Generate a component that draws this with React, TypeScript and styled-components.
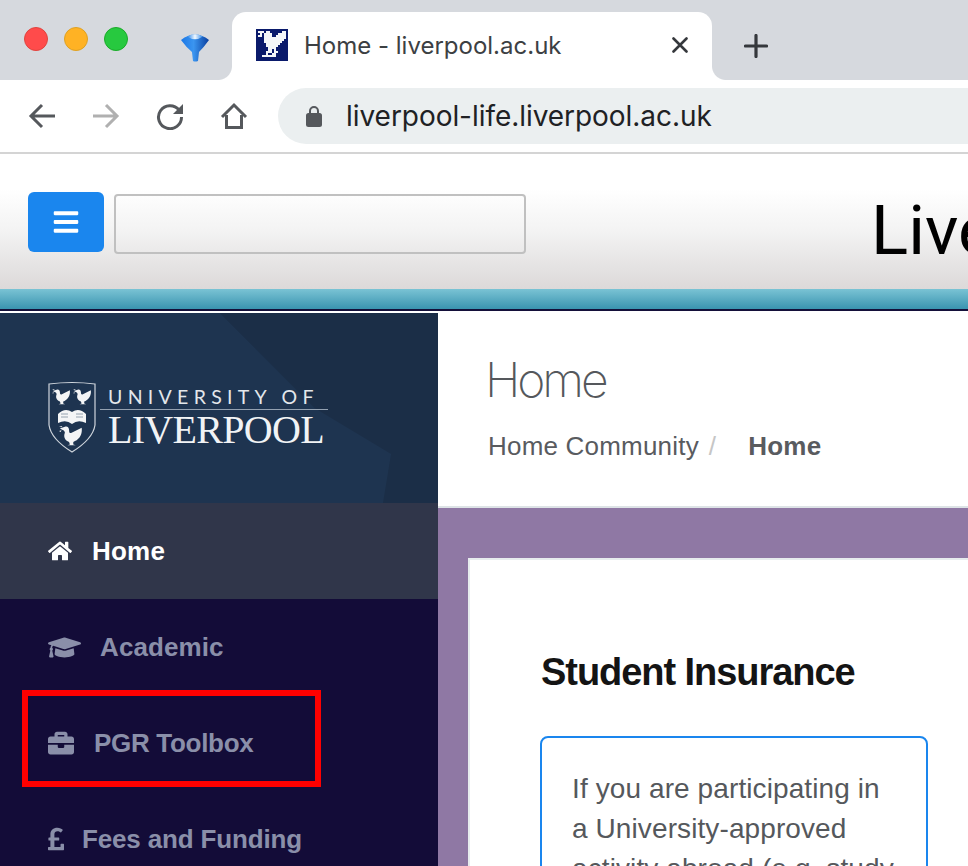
import React from 'react';
import styled, { createGlobalStyle } from 'styled-components';
import { FaHome, FaGraduationCap, FaBriefcase, FaPoundSign, FaBars } from 'react-icons/fa';

const Global = createGlobalStyle`
  html, body { margin: 0; padding: 0; background: #fff; }
  * { box-sizing: border-box; }
`;

const Viewport = styled.div`
  width: 968px;
  height: 866px;
  overflow: hidden;
  display: flex;
  flex-direction: column;
  font-family: "Liberation Sans", Arial, sans-serif;
`;

const TabStrip = styled.div`
  height: 80px;
  flex: none;
  background: #d6d9de;
  display: flex;
  align-items: flex-end;
`;

const Lights = styled.div`
  display: flex;
  gap: 16px;
  padding-left: 24px;
  align-self: flex-start;
  margin-top: 27px;
`;

const Light = styled.span<{ $fill: string; $edge: string }>`
  width: 24px;
  height: 24px;
  border-radius: 50%;
  background: ${p => p.$fill};
  border: 1px solid ${p => p.$edge};
`;

const FunnelSlot = styled.div`
  width: 28px;
  height: 30px;
  margin: 0 0 18px 53px;
  flex: none;
`;

const Tab = styled.div`
  position: relative;
  width: 480px;
  height: 68px;
  margin-left: 23px;
  background: #fff;
  border-radius: 14px 14px 0 0;
  display: flex;
  align-items: center;
  padding: 0 24px 2px;
  &::before, &::after {
    content: '';
    position: absolute;
    bottom: 0;
    width: 14px;
    height: 14px;
  }
  &::before {
    left: -14px;
    background: radial-gradient(circle at 0 0, transparent 13.5px, #fff 14.5px);
  }
  &::after {
    right: -14px;
    background: radial-gradient(circle at 100% 0, transparent 13.5px, #fff 14.5px);
  }
`;

const TabTitle = styled.span`
  font-family: Inter, "Liberation Sans", sans-serif;
  font-size: 24px;
  color: #3c4043;
  margin-left: 16px;
  flex: 1;
  white-space: nowrap;
`;

const NewTab = styled.div`
  width: 24px;
  height: 24px;
  margin: 0 0 22px 32px;
  flex: none;
`;

const Toolbar = styled.div`
  height: 72px;
  flex: none;
  background: #fff;
  display: flex;
  align-items: center;
  padding-left: 10px;
`;

const ToolButton = styled.div`
  width: 64px;
  height: 28px;
  flex: none;
  display: flex;
  align-items: center;
  justify-content: center;
`;

const Address = styled.div`
  flex: 1;
  height: 56px;
  margin-left: 12px;
  background: #ebeff0;
  border-radius: 28px 0 0 28px;
  display: flex;
  align-items: center;
  padding-left: 28px;
  gap: 24px;
`;

const Url = styled.span`
  font-family: Inter, "Liberation Sans", sans-serif;
  font-size: 28px;
  letter-spacing: -0.050px;
  color: #202124;
  white-space: nowrap;
`;

const Divider = styled.div`
  height: 2px;
  flex: none;
  background: #d4d4d4;
`;

const SiteHeader = styled.header`
  height: 135px;
  flex: none;
  background: linear-gradient(#fff 0%, #fff 26%, #f4f4f4 55%, #dcd9d9 100%);
  display: flex;
  align-items: flex-start;
  padding: 38px 0 0 28px;
  overflow: hidden;
`;

const MenuButton = styled.button`
  width: 76px;
  height: 60px;
  flex: none;
  border: 0;
  padding: 0;
  border-radius: 6px;
  background: #1a86ee;
  color: #fff;
  font-size: 28px;
  display: flex;
  align-items: center;
  justify-content: center;
`;

const SearchBox = styled.div`
  width: 412px;
  height: 60px;
  flex: none;
  margin: 2px 0 0 10px;
  border: 2px solid #c0c0c0;
  border-radius: 4px;
`;

const SiteTitle = styled.div`
  margin-left: 345px;
  margin-top: 1px;
  font-family: Roboto, "Liberation Sans", sans-serif;
  font-weight: 400;
  font-size: 69px;
  line-height: 76px;
  color: #000;
  white-space: nowrap;
  flex: none;
`;

const TealBar = styled.div`
  height: 20px;
  flex: none;
  background: linear-gradient(#7ac3d4, #3a94b0);
`;

const NavyRule = styled.div`
  height: 4px;
  flex: none;
  background: linear-gradient(#14103a 50%, #fff 50%);
`;

const Body = styled.div`
  flex: 1;
  min-height: 0;
  display: flex;
`;

const Sidebar = styled.aside`
  width: 438px;
  flex: none;
  background: #130c38;
  display: flex;
  flex-direction: column;
`;

const LogoPanel = styled.div`
  position: relative;
  height: 190px;
  flex: none;
  background: #1e3450;
  display: flex;
  align-items: flex-start;
  padding: 68px 0 0 48px;
  overflow: hidden;
  &::before {
    content: '';
    position: absolute;
    inset: -20px;
    background: #1b2e47;
    clip-path: polygon(46% 0, 120% 0, 120% 120%, 82% 120%, 86% 70%, 70% 50%);
    filter: blur(4px);
  }
  > * { position: relative; }
`;

const Shield = styled.div`
  width: 48px;
  height: 72px;
  flex: none;
`;

const Wordmark = styled.div`
  margin-left: 4px;
  display: flex;
  flex-direction: column;
  width: 228px;
`;

const University = styled.div`
  font-family: Lato, "Liberation Sans", sans-serif;
  font-weight: 400;
  font-size: 19.500px;
  line-height: 22px;
  letter-spacing: 5.300px;
  color: #e3e7eb;
  padding: 5px 0 0 8px;
  white-space: nowrap;
`;

const Rule = styled.div`
  height: 1px;
  background: #94a1b1;
  margin-top: 1px;
`;

const Liverpool = styled.div`
  font-family: "Liberation Serif", serif;
  font-size: 40px;
  line-height: 40px;
  letter-spacing: -0.700px;
  color: #f1f3f5;
  padding: 0 0 0 8px;
  white-space: nowrap;
`;

const NavRow = styled.a<{ $active?: boolean; $gap: number }>`
  position: relative;
  height: 96px;
  flex: none;
  display: flex;
  align-items: center;
  gap: ${p => p.$gap}px;
  padding-left: 48px;
  font-size: 26px;
  font-weight: 700;
  color: ${p => (p.$active ? '#fff' : '#8a8fa9')};
  background: ${p => (p.$active ? '#30364a' : 'transparent')};
`;

const NavLabel = styled.span<{ $track: number }>`
  letter-spacing: ${p => p.$track}px;
  white-space: nowrap;
`;

const Highlight = styled.span`
  position: absolute;
  left: 22px;
  top: -5px;
  width: 299px;
  height: 97px;
  border: 6px solid #ff0000;
`;

const Main = styled.main`
  flex: 1;
  min-width: 0;
  background: #8f78a4;
  display: flex;
  flex-direction: column;
`;

const PageHead = styled.div`
  height: 195px;
  flex: none;
  background: #fff;
  border-bottom: 2px solid #dde3e6;
  padding: 38px 0 0 50px;
`;

const PageTitle = styled.h1`
  margin: 0 0 0 -3px;
  font-family: Inter, "Liberation Sans", sans-serif;
  font-weight: 200;
  font-size: 48px;
  line-height: 58px;
  letter-spacing: -3.100px;
  color: #55585c;
`;

const Crumbs = styled.div`
  margin-top: 19px;
  font-size: 26px;
  line-height: 36px;
  letter-spacing: 0.200px;
  color: #595b5f;
  display: flex;
  white-space: nowrap;
`;

const CrumbSep = styled.span`
  color: #c6c6c6;
  margin: 0 32px 0 10px;
`;

const CrumbNow = styled.b`
  font-weight: 700;
`;

const Card = styled.section`
  margin: 50px -60px 0 30px;
  flex: 1;
  background: #fff;
  border: 2px solid #e7ecee;
  border-bottom: 0;
  padding: 90px 0 0 71px;
`;

const CardTitle = styled.h2`
  margin: 0;
  font-size: 38px;
  line-height: 44px;
  font-weight: 700;
  letter-spacing: -1.050px;
  color: #141414;
`;

const InfoBox = styled.div`
  width: 388px;
  margin: 42px 0 0 -1px;
  border: 2px solid #1a86ee;
  border-radius: 8px;
  padding: 31px 30px;
  font-size: 28px;
  line-height: 40px;
  letter-spacing: 0.100px;
  color: #55585c;
`;

const Bird = ({ x, y, s }: { x: number; y: number; s: number }) => (
  <g transform={`translate(${x} ${y}) scale(${s})`} fill="#f4f5f6">
    <path d="M1 3 L7 1 C10 0 12 2 12 5 C12 8 13 9 15 8 L27 2 C28 9 25 15 19 18 L17 19 L17 22 L20 23 L10 23 L13 22 L12 19 C7 17 5 13 7 8 C7 7 6 5 5 5 Z" />
    <path d="M0 1 L4 0 L3 1.500 Z M0 6 L3 5 L2 7 Z" />
  </g>
);

const ShieldArt = () => (
  <svg width="48" height="72" viewBox="0 0 48 72">
    <path d="M1 3 Q24 0 47 3 L47 44 Q45 58 24 71 Q3 58 1 44 Z" fill="none" stroke="#cfd5dc" strokeWidth="1.200" />
    <Bird x={4} y={8} s={0.66} />
    <Bird x={25} y={8} s={0.66} />
    <path d="M10 33 Q17 26 24 31 Q31 26 38 33 L38 42 Q30 38 24 43 Q18 38 10 42 Z" fill="#f4f5f6" />
    <path d="M13 33 H20 M13 36 H20 M28 33 H35 M28 36 H35" stroke="#7f8ea0" strokeWidth="0.800" />
    <Bird x={11} y={45} s={0.84} />
  </svg>
);

const FunnelArt = () => (
  <svg width="28" height="30" viewBox="0 0 28 30">
    <defs>
      <linearGradient id="cone" x1="0" x2="1" y1="0" y2="0">
        <stop offset="0" stopColor="#1c78e6" />
        <stop offset="0.450" stopColor="#3b95f0" />
        <stop offset="1" stopColor="#0a3f9f" />
      </linearGradient>
      <linearGradient id="rim" x1="0" x2="1" y1="0" y2="0">
        <stop offset="0" stopColor="#1f80ea" />
        <stop offset="0.500" stopColor="#f2f9ff" />
        <stop offset="1" stopColor="#2a86ea" />
      </linearGradient>
    </defs>
    <path d="M0 8 Q14 -3 28 8 Q23 15 18 20 L17 29 Q14 30 12 29 L11 20 Q5 15 0 8 Z" fill="url(#cone)" />
    <path d="M6 4.500 Q14 0 22 4.500 Q14 10 6 4.500 Z" fill="url(#rim)" />
  </svg>
);

const pixels = [
  '................',
  '.###.##......##.',
  '..#.####...####.',
  '.##.####..#####.',
  '....###########.',
  '....##########..',
  '....#########...',
  '.....#######....',
  '.....######.....',
  '......####......',
  '......##.#......',
  '.....###.##.....',
  '.....#..##......',
  '...#######......',
  '................',
  '................',
];

const Favicon = () => (
  <svg width="32" height="32" viewBox="0 0 16 16" shapeRendering="crispEdges">
    <rect width="16" height="16" fill="#0a1a6b" />
    {pixels.flatMap((row, y) =>
      row.split('').map((c, x) => (c === '#' ? <rect key={`${x}-${y}`} x={x} y={y} width="1" height="1" fill="#f4f6f8" /> : null))
    )}
  </svg>
);

const Arrow = ({ color, flip }: { color: string; flip?: boolean }) => (
  <svg width="28" height="26" viewBox="0 0 28 26" fill="none" stroke={color} strokeWidth="3" style={flip ? { transform: 'scaleX(-1)' } : undefined}>
    <path d="M27 13 H3 M14 2 L3 13 L14 24" />
  </svg>
);

const Reload = () => (
  <svg width="28" height="28" viewBox="0 0 28 28" fill="none">
    <path d="M23 8 A11.500 11.500 0 1 0 25.500 15" stroke="#55585c" strokeWidth="3" />
    <path d="M27 2 V12 H17 Z" fill="#55585c" />
  </svg>
);

const HomeGlyph = () => (
  <svg width="28" height="28" viewBox="0 0 28 28" fill="none" stroke="#55585c" strokeWidth="3">
    <path d="M2 15 L14 3 L26 15 M6.500 13 V25.500 H21.500 V13" />
  </svg>
);

const Lock = () => (
  <svg width="16" height="22" viewBox="0 0 16 22">
    <path d="M4 9 V6 A4 4 0 0 1 12 6 V9" fill="none" stroke="#55585c" strokeWidth="2" />
    <rect x="0" y="8" width="16" height="14" rx="2.500" fill="#55585c" />
  </svg>
);

const Close = () => (
  <svg width="16" height="16" viewBox="0 0 16 16" stroke="#35383c" strokeWidth="2.600" strokeLinecap="round">
    <path d="M1.500 1.500 L14.500 14.500 M14.500 1.500 L1.500 14.500" />
  </svg>
);

const Plus = () => (
  <svg width="24" height="24" viewBox="0 0 24 24" stroke="#35383c" strokeWidth="3.200" strokeLinecap="round">
    <path d="M12 1.500 V22.500 M1.500 12 H22.500" />
  </svg>
);

export default function App() {
  return (
    <Viewport>
      <Global />
      <TabStrip>
        <Lights>
          <Light $fill="#ff4b4b" $edge="#e0443e" />
          <Light $fill="#ffb224" $edge="#dea123" />
          <Light $fill="#27c93f" $edge="#1aab29" />
        </Lights>
        <FunnelSlot><FunnelArt /></FunnelSlot>
        <Tab>
          <Favicon />
          <TabTitle>Home - liverpool.ac.uk</TabTitle>
          <Close />
        </Tab>
        <NewTab><Plus /></NewTab>
      </TabStrip>
      <Toolbar>
        <ToolButton><Arrow color="#55585c" /></ToolButton>
        <ToolButton><Arrow color="#b0b0b0" flip /></ToolButton>
        <ToolButton><Reload /></ToolButton>
        <ToolButton><HomeGlyph /></ToolButton>
        <Address>
          <Lock />
          <Url>liverpool-life.liverpool.ac.uk</Url>
        </Address>
      </Toolbar>
      <Divider />
      <SiteHeader>
        <MenuButton aria-label="menu"><FaBars /></MenuButton>
        <SearchBox />
        <SiteTitle>Liverpool Life</SiteTitle>
      </SiteHeader>
      <TealBar />
      <NavyRule />
      <Body>
        <Sidebar>
          <LogoPanel>
            <Shield><ShieldArt /></Shield>
            <Wordmark>
              <University>UNIVERSITY OF</University>
              <Rule />
              <Liverpool>LIVERPOOL</Liverpool>
            </Wordmark>
          </LogoPanel>
          <NavRow $active $gap={20}><FaHome size={24} /><NavLabel $track={0.2}>Home</NavLabel></NavRow>
          <NavRow $gap={19}><FaGraduationCap size={33} /><NavLabel $track={0.1}>Academic</NavLabel></NavRow>
          <NavRow $gap={20}>
            <FaBriefcase size={26} /><NavLabel $track={-0.3}>PGR Toolbox</NavLabel>
            <Highlight />
          </NavRow>
          <NavRow $gap={18}><FaPoundSign size={16} style={{ height: 28 }} /><NavLabel $track={-0.15}>Fees and Funding</NavLabel></NavRow>
        </Sidebar>
        <Main>
          <PageHead>
            <PageTitle>Home</PageTitle>
            <Crumbs>
              Home Community<CrumbSep>/</CrumbSep><CrumbNow>Home</CrumbNow>
            </Crumbs>
          </PageHead>
          <Card>
            <CardTitle>Student Insurance</CardTitle>
            <InfoBox>
              If you are participating in a University-approved activity abroad (e.g. study abroad, fieldwork or conference)
            </InfoBox>
          </Card>
        </Main>
      </Body>
    </Viewport>
  );
}
